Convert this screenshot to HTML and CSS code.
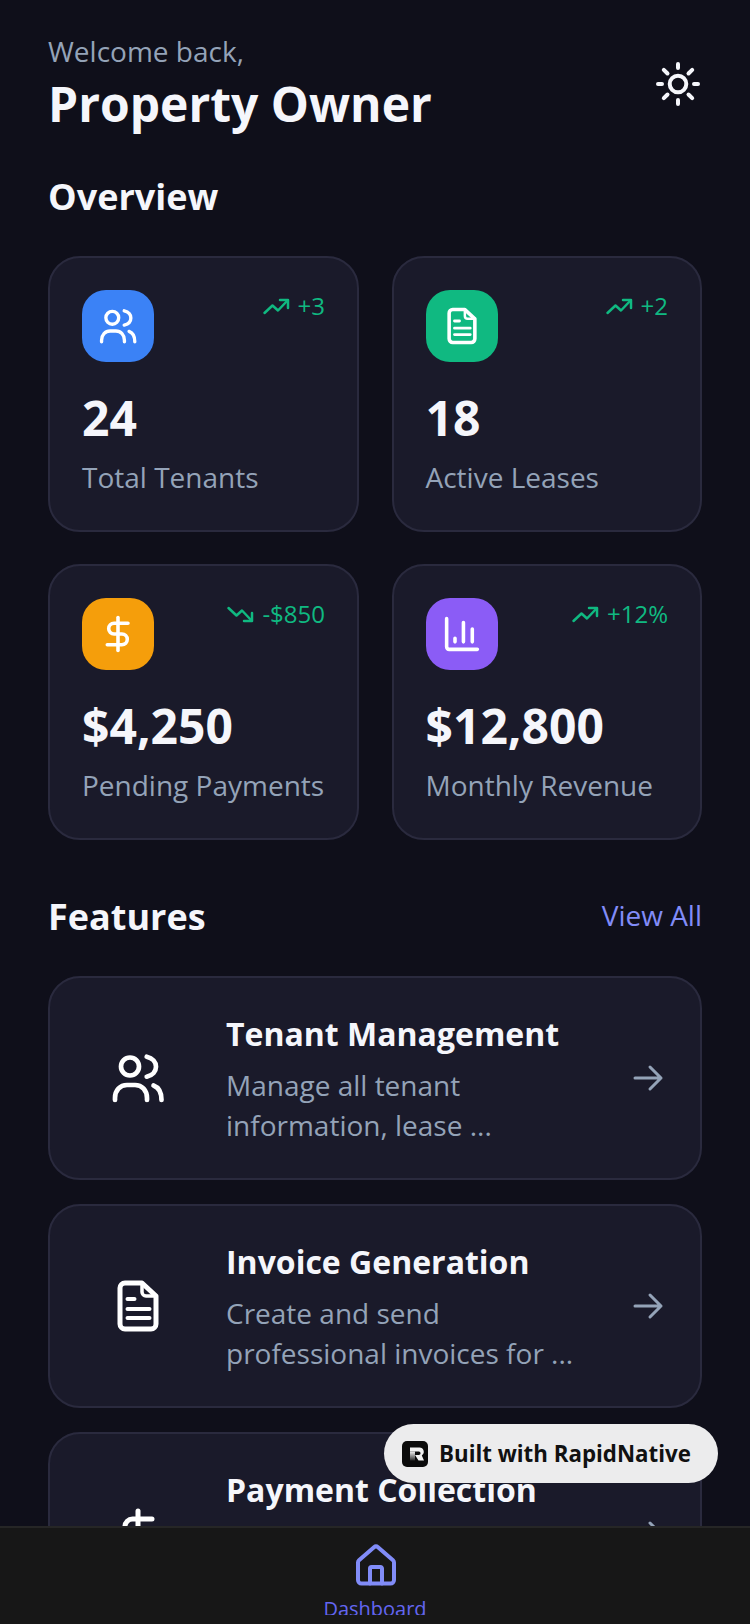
FILE: index.html
```html
<!DOCTYPE html>
<html lang="en">
<head>
    <meta charset="UTF-8">
    <meta name="viewport" content="width=device-width, initial-scale=1.0">
    <title>Property Owner Dashboard</title>
    <link rel="stylesheet" href="styles.css">
</head>
<body>
    <div class="app">
        <main class="content">
            <header class="header">
                <div>
                    <p class="welcome">Welcome back,</p>
                    <h1 class="owner">Property Owner</h1>
                </div>
                <svg class="theme-icon" viewBox="0 0 48 48">
                    <circle cx="24" cy="24" r="8.300"/>
                    <path d="M24 4v4M24 40v4M4 24h4M40 24h4M9.800 9.800l3.700 3.700M34.500 34.500l3.700 3.700M9.800 38.200l3.700-3.700M34.500 13.500l3.700-3.700"/>
                </svg>
            </header>

            <h2 class="section-title">Overview</h2>

            <!-- Stat cards -->
            <section class="stats">
                <div class="stat-card">
                    <div class="stat-top">
                        <div class="stat-icon blue">
                            <svg class="icon-40" viewBox="0 0 56 56"><use href="#users"/></svg>
                        </div>
                        <div class="trend">
                            <svg class="trend-icon" viewBox="0 0 28 28"><use href="#trend-up"/></svg>
                            <span class="trend-text">+3</span>
                        </div>
                    </div>
                    <div class="stat-value">24</div>
                    <div class="stat-label">Total Tenants</div>
                </div>
                <div class="stat-card">
                    <div class="stat-top">
                        <div class="stat-icon green">
                            <svg class="icon-40" viewBox="0 0 56 56"><use href="#doc"/></svg>
                        </div>
                        <div class="trend">
                            <svg class="trend-icon" viewBox="0 0 28 28"><use href="#trend-up"/></svg>
                            <span class="trend-text">+2</span>
                        </div>
                    </div>
                    <div class="stat-value">18</div>
                    <div class="stat-label">Active Leases</div>
                </div>
                <div class="stat-card">
                    <div class="stat-top">
                        <div class="stat-icon amber">
                            <svg class="icon-40" viewBox="0 0 56 56"><use href="#dollar"/></svg>
                        </div>
                        <div class="trend">
                            <svg class="trend-icon" viewBox="0 0 28 28"><use href="#trend-down"/></svg>
                            <span class="trend-text">-$850</span>
                        </div>
                    </div>
                    <div class="stat-value">$4,250</div>
                    <div class="stat-label">Pending Payments</div>
                </div>
                <div class="stat-card">
                    <div class="stat-top">
                        <div class="stat-icon purple">
                            <svg class="icon-40" viewBox="0 0 56 56"><use href="#chart"/></svg>
                        </div>
                        <div class="trend">
                            <svg class="trend-icon" viewBox="0 0 28 28"><use href="#trend-up"/></svg>
                            <span class="trend-text">+12%</span>
                        </div>
                    </div>
                    <div class="stat-value">$12,800</div>
                    <div class="stat-label">Monthly Revenue</div>
                </div>
            </section>

            <div class="features-head">
                <h2 class="section-title">Features</h2>
                <span class="view-all">View All</span>
            </div>

            <!-- Feature list -->
            <section class="features">
                <div class="feature-card">
                    <div class="feature-icon">
                        <svg class="icon-56" viewBox="0 0 56 56"><use href="#users"/></svg>
                    </div>
                    <div class="feature-text">
                        <div class="feature-title">Tenant Management</div>
                        <div class="feature-desc">Manage all tenant<br>information, lease ...</div>
                    </div>
                    <svg class="arrow" viewBox="0 0 32 32"><use href="#arrow"/></svg>
                </div>
                <div class="feature-card">
                    <div class="feature-icon">
                        <svg class="icon-56" viewBox="0 0 56 56"><use href="#doc"/></svg>
                    </div>
                    <div class="feature-text">
                        <div class="feature-title">Invoice Generation</div>
                        <div class="feature-desc">Create and send<br>professional invoices for ...</div>
                    </div>
                    <svg class="arrow" viewBox="0 0 32 32"><use href="#arrow"/></svg>
                </div>
                <div class="feature-card">
                    <div class="feature-icon">
                        <svg class="icon-56" viewBox="0 0 56 56"><use href="#dollar"/></svg>
                    </div>
                    <div class="feature-text">
                        <div class="feature-title">Payment Collection</div>
                        <div class="feature-desc">Collect rent online and<br>track all payments ...</div>
                    </div>
                    <svg class="arrow" viewBox="0 0 32 32"><use href="#arrow"/></svg>
                </div>
            </section>
        </main>

        <div class="badge">
            <svg class="badge-logo" viewBox="0 0 26 26">
                <defs>
                    <linearGradient id="stemFade" x1="0" y1="0" x2="0" y2="1">
                        <stop offset="0" stop-color="#f2f2f2"/>
                        <stop offset="1" stop-color="#2a2a2a"/>
                    </linearGradient>
                </defs>
                <rect width="26" height="26" rx="5" fill="#0b0b0b"/>
                <path d="M8 10.500h5v9H8z" fill="url(#stemFade)"/>
                <path d="M8 6.500h9.500a4.300 4.300 0 0 1 2.300 7.900L22 19.500h-5.500L13 14h3.800a1.400 1.400 0 0 0 0-3.500H8z" fill="#f2f2f2"/>
            </svg>
            <span>Built with RapidNative</span>
        </div>

        <nav class="tabbar">
            <svg class="tab-icon" viewBox="0 0 44 44">
                <path d="M4 19.500a3 3 0 0 1 1-2.300L20 4.200a3 3 0 0 1 4 0l15 13a3 3 0 0 1 1 2.300V37a3.500 3.500 0 0 1-3.500 3.500h-29A3.500 3.500 0 0 1 4 37z"/>
                <path d="M16 40.500V25.500a1.500 1.500 0 0 1 1.500-1.500h9a1.500 1.500 0 0 1 1.500 1.500v15"/>
            </svg>
            <span class="tab-label">Dashboard</span>
        </nav>
    </div>

    <!-- Shared icons -->
    <svg class="sprite">
        <defs>
            <g id="users" fill="none" stroke="currentColor" stroke-width="4.700" stroke-linecap="round">
                <circle cx="20" cy="16.500" r="9"/>
                <path d="M36.700 6.700c6 1.500 9.300 5.500 9.300 10s-3.300 8.500-9.300 10"/>
                <path d="M5 50v-2c0-7.500 5-13 12-13h8c7 0 12 5.500 12 13v2"/>
                <path d="M43.500 35.500c5.500 2 8 7.500 8 14.500"/>
            </g>
            <g id="doc" fill="none" stroke="currentColor" stroke-width="5" stroke-linecap="round" stroke-linejoin="round">
                <path d="M32 5H15a5 5 0 0 0-5 5v36a5 5 0 0 0 5 5h26a5 5 0 0 0 5-5V18z"/>
                <path d="M32 5v9a4 4 0 0 0 4 4h10" stroke-width="3.500"/>
                <path d="M17.500 21h7M17.500 31h22M17.500 40h22" stroke-width="4"/>
            </g>
            <g id="dollar" fill="none" stroke="currentColor" stroke-width="5" stroke-linecap="round" stroke-linejoin="round">
                <path d="M28 5v46"/>
                <path d="M42 13H22.500a7.500 7.500 0 0 0 0 15h11a7.500 7.500 0 0 1 0 15H13"/>
            </g>
            <g id="chart" fill="none" stroke="currentColor" stroke-width="5" stroke-linecap="round" stroke-linejoin="round">
                <path d="M6.500 6.500V46a3.500 3.500 0 0 0 3.500 3.500h39.500"/>
                <path d="M18.200 34v5M30 12v27M42.400 21v18"/>
            </g>
            <g id="trend-up" fill="none" stroke="currentColor" stroke-width="2.500" stroke-linecap="round" stroke-linejoin="round">
                <path d="M2.500 20l8-7.500 5.500 5L25.500 7.500"/>
                <path d="M18 7h8v8"/>
            </g>
            <g id="trend-down" fill="none" stroke="currentColor" stroke-width="2.500" stroke-linecap="round" stroke-linejoin="round">
                <path d="M2.500 7l8 7.500 5.500-5L25.500 19.500"/>
                <path d="M18 20h8v-8"/>
            </g>
            <g id="arrow" fill="none" stroke="currentColor" stroke-width="3" stroke-linecap="round" stroke-linejoin="round">
                <path d="M3 16h26M18 5l11 11-11 11"/>
            </g>
        </defs>
    </svg>
</body>
</html>
```

FILE: styles.css
```css
* { box-sizing: border-box; }

body {
    margin: 0;
    background-color: #0f0f1a;
    font-family: "Open Sans", sans-serif;
    color: #f5f6fb;
}

.app {
    position: relative;
    width: 750px;
    height: 1624px;
    overflow: hidden;
}

.content { padding: 31px 48px 0; }

/* Header */
.header {
    display: flex;
    justify-content: space-between;
    align-items: center;
    margin-bottom: 37px;
}
.welcome {
    margin: 0;
    font-size: 28px;
    line-height: 40px;
    color: #94a3b8;
}
.owner {
    margin: 1px 0 0;
    font-size: 48px;
    line-height: 64px;
    font-weight: 700;
}
.theme-icon {
    width: 48px;
    height: 48px;
    fill: none;
    stroke: #f5f6fb;
    stroke-width: 4;
    stroke-linecap: round;
}

.section-title {
    margin: 0;
    font-size: 36px;
    line-height: 48px;
    font-weight: 700;
}

/* Stat cards */
.stats {
    display: grid;
    grid-template-columns: 311px 310.5px;
    column-gap: 32.5px;
    row-gap: 32px;
    margin-top: 35px;
}
.stat-card {
    height: 276px;
    padding: 32px 32px 0;
    background-color: #1a1a2a;
    border: 2px solid #2a2a3e;
    border-radius: 32px;
}
.stat-top {
    display: flex;
    justify-content: space-between;
    align-items: flex-start;
}
.stat-icon {
    display: flex;
    align-items: center;
    justify-content: center;
    width: 72px;
    height: 72px;
    border-radius: 24px;
    color: #fff;
}
.blue { background-color: #3b82f6; }
.green { background-color: #10b981; }
.amber { background-color: #f59e0b; }
.purple { background-color: #8b5cf6; }
.icon-40 { width: 40px; height: 40px; }

.trend {
    display: flex;
    align-items: center;
    gap: 8px;
    font-size: 24px;
    line-height: 32px;
    color: #10b981;
}
.trend-icon { width: 28px; height: 28px; }
.trend-text { padding-bottom: 2px; }

.stat-value {
    margin-top: 24px;
    font-size: 48px;
    line-height: 64px;
    font-weight: 700;
}
.stat-label {
    margin-top: 7px;
    font-size: 28px;
    line-height: 40px;
    color: #94a3b8;
}

/* Features */
.features-head {
    display: flex;
    justify-content: space-between;
    align-items: center;
    margin-top: 53px;
}
.view-all {
    padding-bottom: 4px;
    font-size: 28px;
    color: #818cf8;
}
.features {
    display: flex;
    flex-direction: column;
    gap: 24px;
    margin-top: 35px;
}
.feature-card {
    display: flex;
    align-items: center;
    height: 204px;
    padding: 0 36px 0 32px;
    background-color: #1a1a2a;
    border: 2px solid #2a2a3e;
    border-radius: 32px;
}
.feature-icon {
    display: flex;
    justify-content: center;
    width: 111px;
    margin-right: 33px;
    color: #fff;
}
.icon-56 { width: 56px; height: 56px; }
.feature-text { flex: 1; }
.feature-title {
    font-size: 32px;
    line-height: 44px;
    font-weight: 700;
}
.feature-desc {
    margin-top: 9px;
    font-size: 28px;
    line-height: 40px;
    color: #94a3b8;
}
.arrow {
    width: 32px;
    height: 32px;
    color: #94a3b8;
}

/* Badge */
.badge {
    position: absolute;
    left: 384px;
    top: 1424px;
    display: flex;
    align-items: center;
    gap: 11px;
    width: 334px;
    height: 59px;
    padding-left: 18px;
    background-color: #ececed;
    border-radius: 30px;
    font-size: 22.300px;
    font-weight: 700;
    color: #111;
}
.badge-logo { width: 26px; height: 26px; }

/* Bottom bar */
.tabbar {
    position: absolute;
    left: 0;
    right: 0;
    top: 1526px;
    height: 98px;
    display: flex;
    flex-direction: column;
    align-items: center;
    padding-top: 15px;
    background-color: #171717;
    border-top: 2px solid #262626;
}
.tab-icon {
    width: 44px;
    height: 44px;
    margin-left: 2px;
    fill: none;
    stroke: #818cf8;
    stroke-width: 4;
    stroke-linejoin: round;
    stroke-linecap: round;
}
.tab-label {
    height: 21px;
    margin-top: 7px;
    overflow: hidden;
    font-size: 20px;
    line-height: 30px;
    color: #6366f1;
}

.sprite {
    position: absolute;
    width: 0;
    height: 0;
}
```
